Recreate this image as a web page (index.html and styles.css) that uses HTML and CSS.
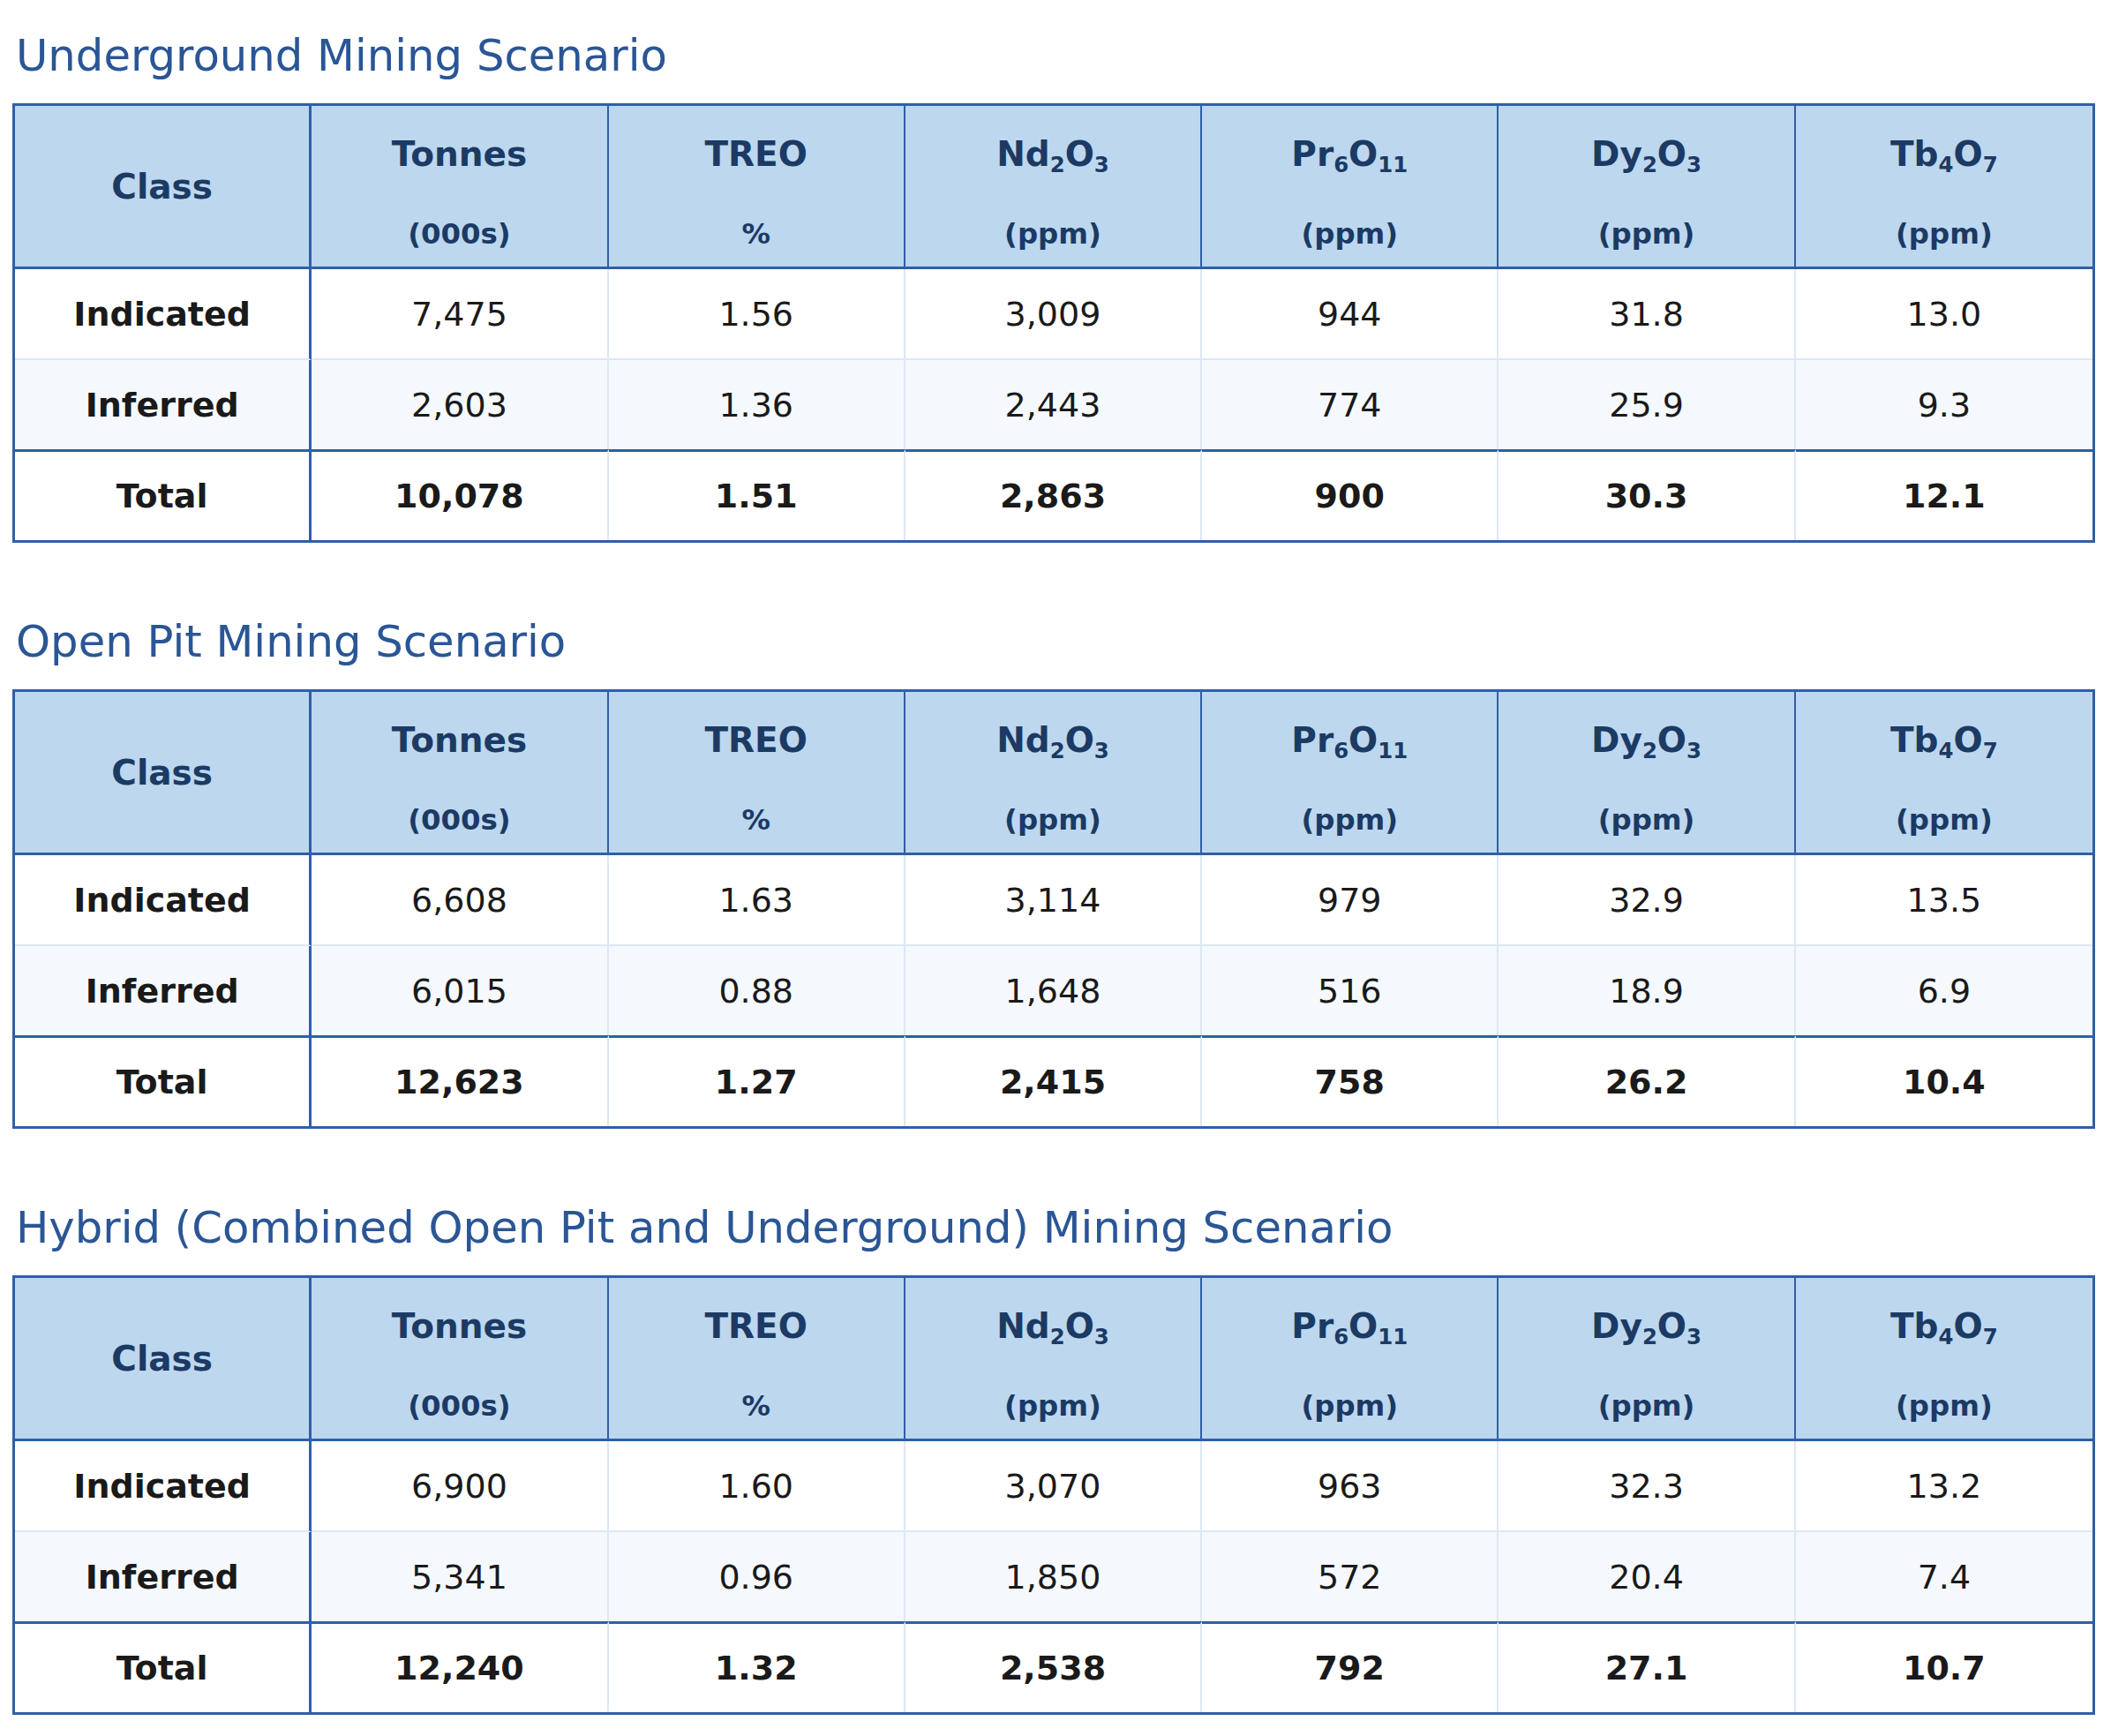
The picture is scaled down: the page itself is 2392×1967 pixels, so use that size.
FILE: index.html
```html
<!DOCTYPE html>
<html lang="en">
<head>
<meta charset="utf-8">
<title>Mining Scenarios</title>
<link rel="stylesheet" href="styles.css">
</head>
<body>
<div class="page">

<section class="section">
<h2 class="title">Underground Mining Scenario</h2>
<table class="grid">
<thead>
<tr class="head-row">
<th class="c-class">Class</th>
<th><div class="lbl">Tonnes</div><div class="unit">(000s)</div></th>
<th><div class="lbl">TREO</div><div class="unit">%</div></th>
<th><div class="lbl">Nd<sub>2</sub>O<sub>3</sub></div><div class="unit">(ppm)</div></th>
<th><div class="lbl">Pr<sub>6</sub>O<sub>11</sub></div><div class="unit">(ppm)</div></th>
<th><div class="lbl">Dy<sub>2</sub>O<sub>3</sub></div><div class="unit">(ppm)</div></th>
<th><div class="lbl">Tb<sub>4</sub>O<sub>7</sub></div><div class="unit">(ppm)</div></th>
</tr>
</thead>
<tbody>
<tr class="r1"><td class="c-class">Indicated</td><td>7,475</td><td>1.56</td><td>3,009</td><td>944</td><td>31.8</td><td>13.0</td></tr>
<tr class="r2"><td class="c-class">Inferred</td><td>2,603</td><td>1.36</td><td>2,443</td><td>774</td><td>25.9</td><td>9.3</td></tr>
<tr class="total"><td class="c-class">Total</td><td>10,078</td><td>1.51</td><td>2,863</td><td>900</td><td>30.3</td><td>12.1</td></tr>
</tbody>
</table>
</section>

<section class="section">
<h2 class="title">Open Pit Mining Scenario</h2>
<table class="grid">
<thead>
<tr class="head-row">
<th class="c-class">Class</th>
<th><div class="lbl">Tonnes</div><div class="unit">(000s)</div></th>
<th><div class="lbl">TREO</div><div class="unit">%</div></th>
<th><div class="lbl">Nd<sub>2</sub>O<sub>3</sub></div><div class="unit">(ppm)</div></th>
<th><div class="lbl">Pr<sub>6</sub>O<sub>11</sub></div><div class="unit">(ppm)</div></th>
<th><div class="lbl">Dy<sub>2</sub>O<sub>3</sub></div><div class="unit">(ppm)</div></th>
<th><div class="lbl">Tb<sub>4</sub>O<sub>7</sub></div><div class="unit">(ppm)</div></th>
</tr>
</thead>
<tbody>
<tr class="r1"><td class="c-class">Indicated</td><td>6,608</td><td>1.63</td><td>3,114</td><td>979</td><td>32.9</td><td>13.5</td></tr>
<tr class="r2"><td class="c-class">Inferred</td><td>6,015</td><td>0.88</td><td>1,648</td><td>516</td><td>18.9</td><td>6.9</td></tr>
<tr class="total"><td class="c-class">Total</td><td>12,623</td><td>1.27</td><td>2,415</td><td>758</td><td>26.2</td><td>10.4</td></tr>
</tbody>
</table>
</section>

<section class="section">
<h2 class="title">Hybrid (Combined Open Pit and Underground) Mining Scenario</h2>
<table class="grid">
<thead>
<tr class="head-row">
<th class="c-class">Class</th>
<th><div class="lbl">Tonnes</div><div class="unit">(000s)</div></th>
<th><div class="lbl">TREO</div><div class="unit">%</div></th>
<th><div class="lbl">Nd<sub>2</sub>O<sub>3</sub></div><div class="unit">(ppm)</div></th>
<th><div class="lbl">Pr<sub>6</sub>O<sub>11</sub></div><div class="unit">(ppm)</div></th>
<th><div class="lbl">Dy<sub>2</sub>O<sub>3</sub></div><div class="unit">(ppm)</div></th>
<th><div class="lbl">Tb<sub>4</sub>O<sub>7</sub></div><div class="unit">(ppm)</div></th>
</tr>
</thead>
<tbody>
<tr class="r1"><td class="c-class">Indicated</td><td>6,900</td><td>1.60</td><td>3,070</td><td>963</td><td>32.3</td><td>13.2</td></tr>
<tr class="r2"><td class="c-class">Inferred</td><td>5,341</td><td>0.96</td><td>1,850</td><td>572</td><td>20.4</td><td>7.4</td></tr>
<tr class="total"><td class="c-class">Total</td><td>12,240</td><td>1.32</td><td>2,538</td><td>792</td><td>27.1</td><td>10.7</td></tr>
</tbody>
</table>
</section>

</div>
</body>
</html>
```

FILE: styles.css
```css
* {
  box-sizing: border-box;
}

html,
body {
  margin: 0;
  padding: 0;
  background: #ffffff;
}

body {
  font-family: "DejaVu Sans", "Liberation Sans", sans-serif;
  color: #1a1a1a;
}

.page {
  padding: 34px 18px 18px 14px;
}

.section {
  margin-bottom: 83px;
}

.section:last-child {
  margin-bottom: 0;
}

.title {
  margin: 0 0 25px;
  padding-left: 4px;
  font-size: 49.7px;
  line-height: 58px;
  font-weight: normal;
  color: #2a5696;
}

.grid {
  width: 100%;
  table-layout: fixed;
  border-collapse: separate;
  border-spacing: 0;
  border: 3px solid #2f5fa7;
}

.grid th,
.grid td {
  padding: 0;
  text-align: center;
}

.head-row {
  height: 185px;
}

.grid th {
  background: #bdd7ee;
  color: #1b3a64;
  font-weight: bold;
  font-size: 39px;
  vertical-align: top;
  border-bottom: 3px solid #2f5fa7;
  border-right: 2px solid #2f5fa7;
}

.grid th.c-class {
  vertical-align: middle;
  line-height: 45px;
  border-right: 3px solid #2f5fa7;
}

.grid th:last-child {
  border-right: none;
}

.lbl {
  margin-top: 32px;
  font-size: 39px;
  line-height: 45px;
  white-space: nowrap;
}

.lbl sub {
  font-size: 24.4px;
  line-height: 0;
  vertical-align: -6.8px;
}

.unit {
  margin-top: 49.9px;
  font-size: 32.4px;
  line-height: 37.8px;
}

.grid td {
  font-size: 38px;
  vertical-align: middle;
  color: #1a1a1a;
  border-right: 2px solid #dce8f4;
}

.grid td:last-child {
  border-right: none;
}

.grid td.c-class {
  font-weight: bold;
  border-right: 3px solid #2f5fa7;
}

.r1 {
  height: 103px;
}

.r1 td {
  border-bottom: 2px solid #dce8f4;
}

.r2 {
  height: 101px;
}

.r2 td {
  background: #f5f9fd;
}

.total {
  height: 103px;
}

.total td {
  font-weight: bold;
  border-top: 3px solid #2f5fa7;
}
```
